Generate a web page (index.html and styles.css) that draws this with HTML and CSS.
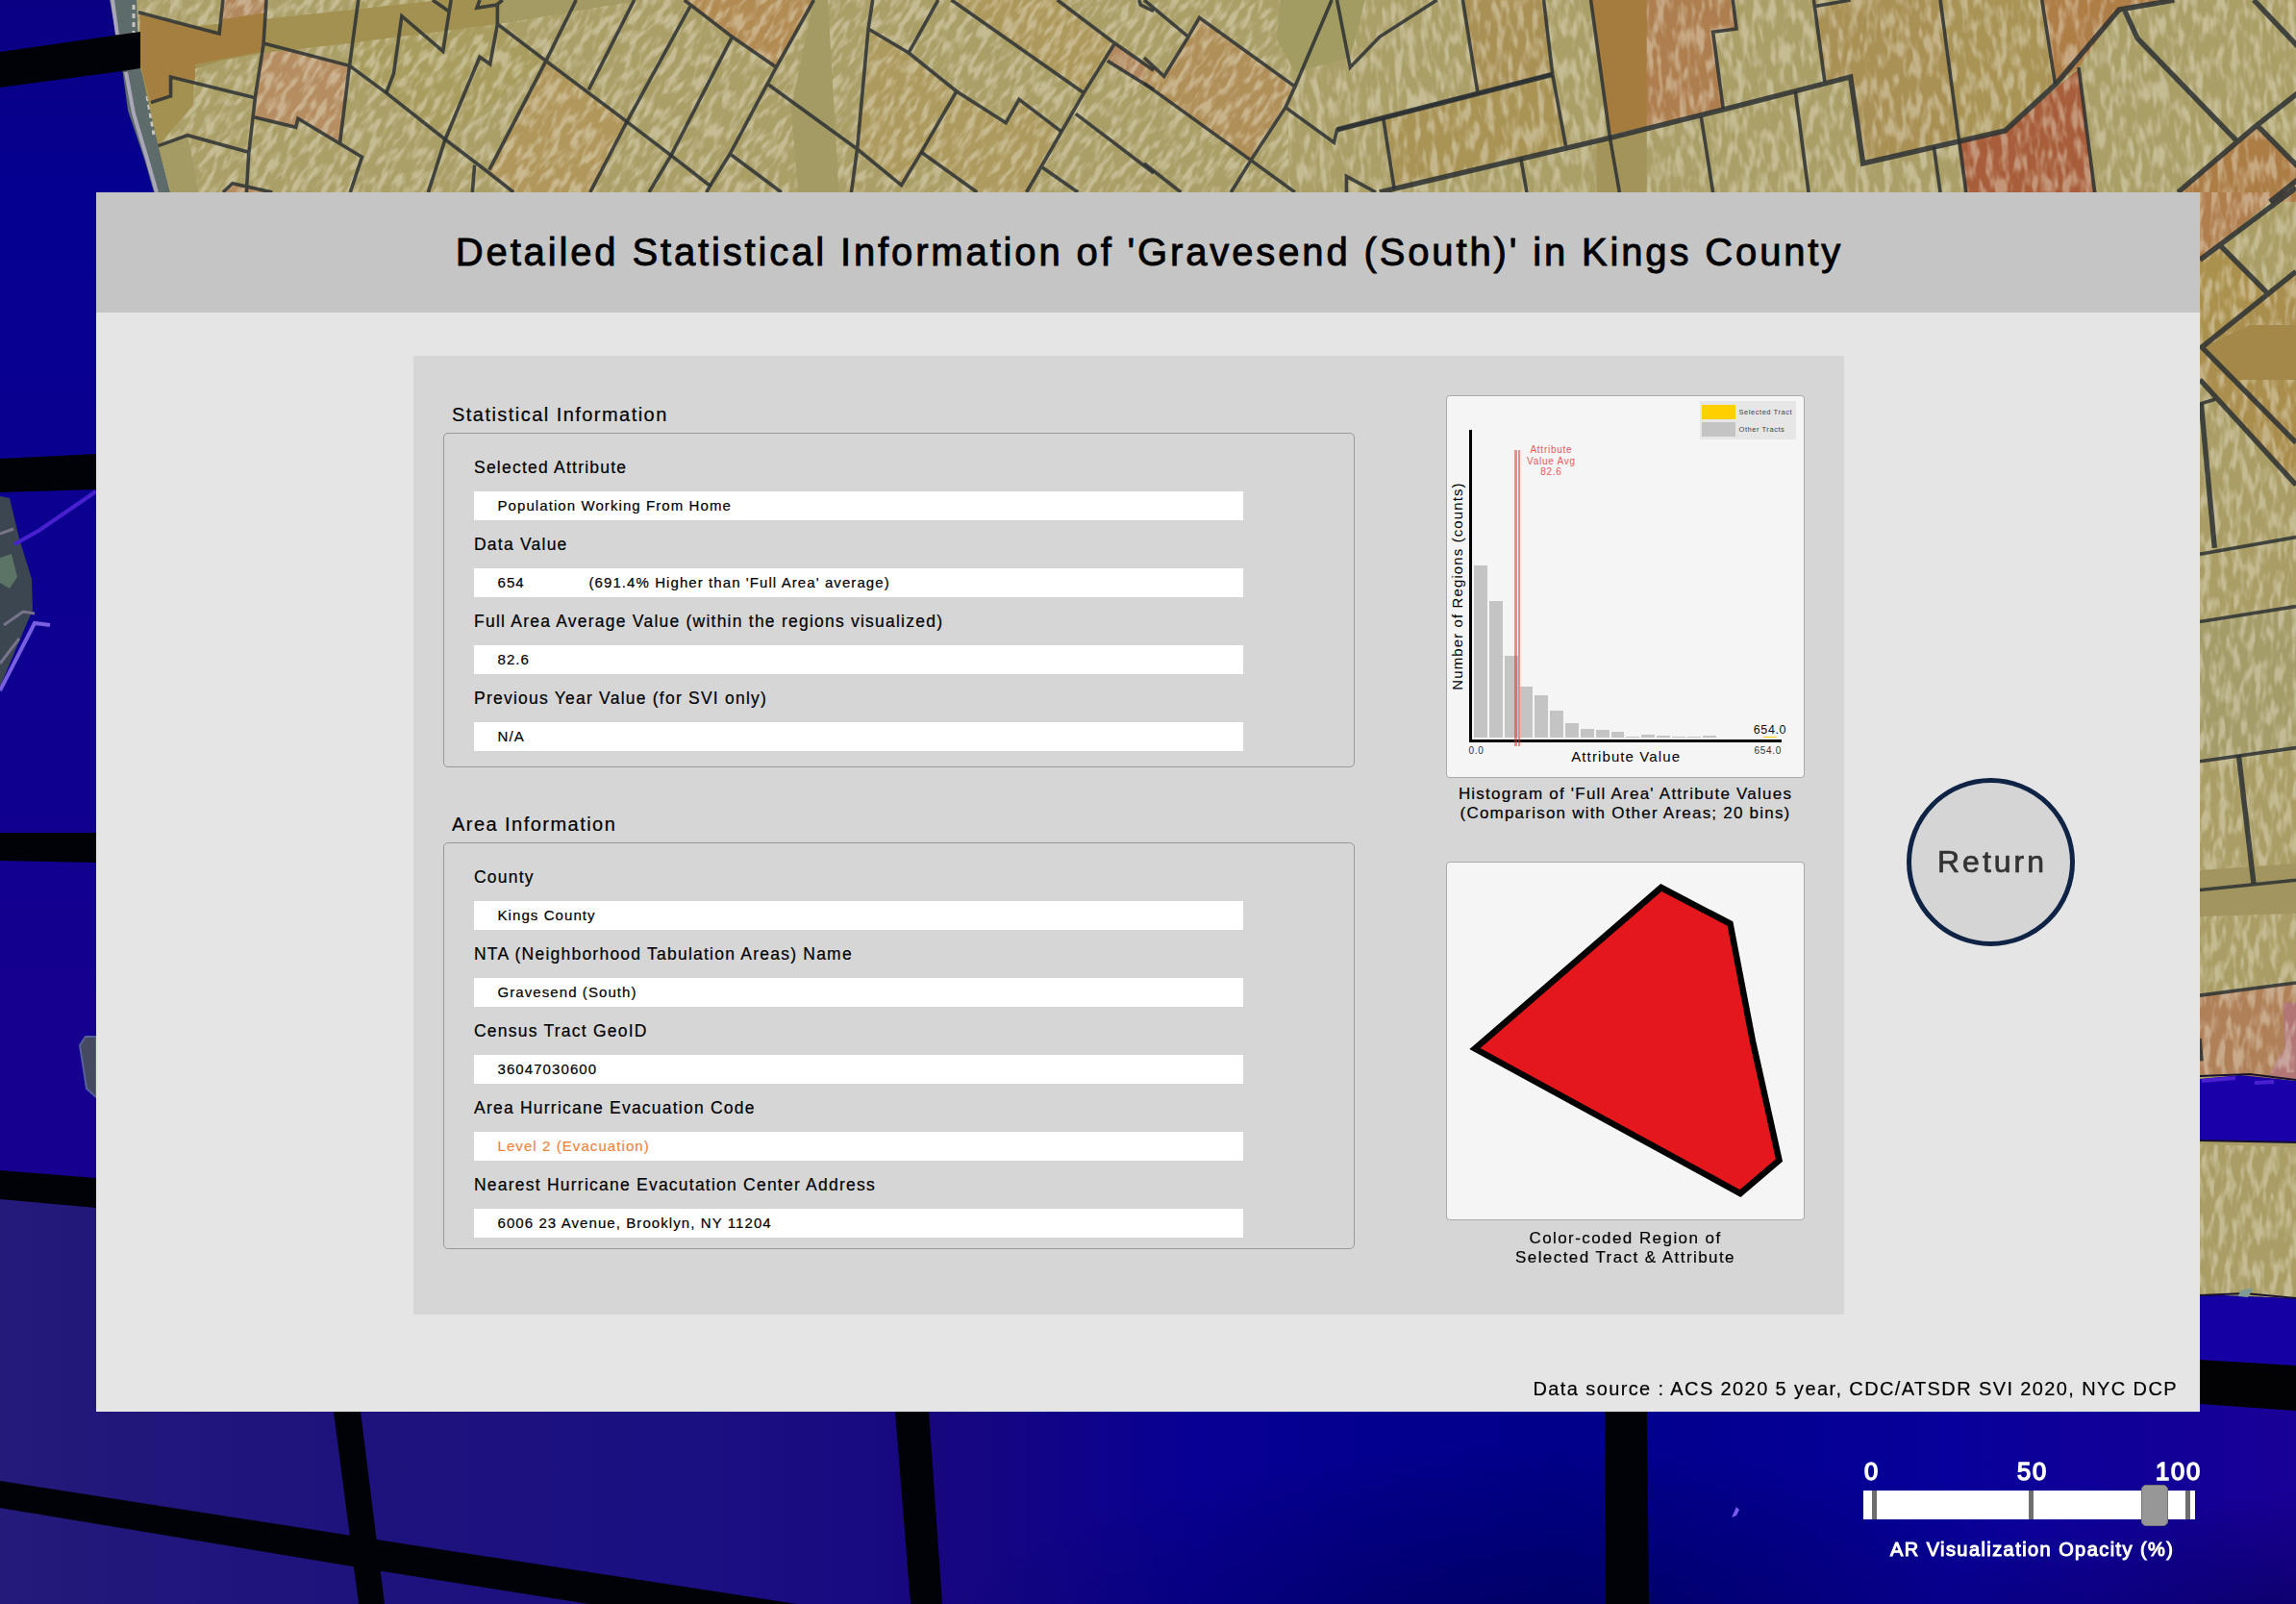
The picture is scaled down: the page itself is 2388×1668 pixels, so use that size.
FILE: index.html
```
<!DOCTYPE html>
<html lang="en">
<head>
<meta charset="utf-8">
<title>Detailed Statistical Information</title>
<link rel="stylesheet" href="styles.css">
</head>
<body>
<svg class="map" viewBox="0 0 2388 1668" aria-hidden="true">
  <defs>
    <linearGradient id="water" x1="0" y1="0" x2="0" y2="1">
      <stop offset="0" stop-color="#0a0084"/><stop offset=".12" stop-color="#050090"/>
      <stop offset=".5" stop-color="#100090"/><stop offset=".62" stop-color="#15008f"/>
    </linearGradient>
    <linearGradient id="deep" x1="0" y1="0" x2="1" y2="0">
      <stop offset="0" stop-color="#231a7a"/><stop offset=".15" stop-color="#1e127c"/>
      <stop offset=".3" stop-color="#1b1082"/><stop offset=".42" stop-color="#16067f"/>
      <stop offset=".52" stop-color="#080094"/><stop offset=".68" stop-color="#00008a"/>
      <stop offset=".85" stop-color="#08009a"/><stop offset="1" stop-color="#190096"/>
    </linearGradient>
    <radialGradient id="shade">
      <stop offset="0" stop-color="#000040" stop-opacity=".55"/><stop offset="1" stop-color="#000040" stop-opacity="0"/>
    </radialGradient>
    <filter id="blocksA" x="0" y="0" width="100%" height="100%">
      <feTurbulence type="fractalNoise" baseFrequency=".15 .055" numOctaves="2" seed="4"/>
      <feColorMatrix values="0 0 0 0 .82  0 0 0 0 .78  0 0 0 0 .64  4 0 0 0 -1.75"/>
    </filter>
    <filter id="blocksB" x="0" y="0" width="100%" height="100%">
      <feTurbulence type="fractalNoise" baseFrequency=".13 .045" numOctaves="2" seed="9"/>
      <feColorMatrix values="0 0 0 0 .82  0 0 0 0 .78  0 0 0 0 .64  4 0 0 0 -1.75"/>
    </filter>
    <clipPath id="landLeft"><path d="M142 0L145 67 157 107 165 153 177 200H1340V0Z"/></clipPath>
    <clipPath id="landRight"><path d="M1340 0H2388V200H1340Z"/></clipPath>
    <clipPath id="landEdge"><path d="M2288 200H2388V1115L2288 1120ZM2288 1190L2388 1193V1350L2288 1346Z"/></clipPath>
  </defs>

  <rect width="2388" height="1668" fill="url(#water)"/>
  <path fill="url(#deep)" d="M0 1240H2388V1668H0Z"/>
  <ellipse fill="url(#shade)" cx="1600" cy="1700" rx="620" ry="200"/>
  <ellipse fill="url(#shade)" cx="2388" cy="1700" rx="400" ry="150"/>

  <!-- Land -->
  <path fill="#5d6b6a" d="M114 0H145L149 80 160 120 180 200H160L150 165 133 115 127 70Z"/>
  <path fill="none" stroke="#a9a6b8" stroke-width="4" d="M117 0L122 36M131 75L139 118 153 165 163 200"/>
  <path fill="none" stroke="#c9c6c0" stroke-width="3" stroke-dasharray="5 4" d="M139 5V34M153 100L160 140"/>
  <path fill="#ab9f68" d="M142 0L145 67 157 107 165 153 177 200H2388V0Z"/>
  <path fill="#aa9e66" d="M2288 200H2388V1350L2288 1346Z"/>

  <g transform="scale(.7653 .3333)">
    <path fill="#a89c5e" d="M487 0L475 205 525 290 605 435 742 190 676 75 683 0Z"/>
    <path fill="#b1975c" d="M742 190L852 380 802 600H698L665 540Z"/>
    <path fill="#b28b52" d="M938 20L1055 210 1106 0H930Z"/>
    <path fill="#ad9a5e" d="M1186 90L1300 285 1225 578 1165 465ZM1300 285L1367 383 1385 310 1442 410 1395 600H1328L1252 475Z"/>
    <path fill="#ae995c" d="M1293 0L1473 290 1515 135 1437 0Z"/>
    <path fill="#b58d60" d="M358 135L475 205 462 445 405 370 402 397 345 365ZM303 600L316 572 370 600Z"/>
    <path fill="#b2895e" d="M305 0H362L358 140 300 100ZM1515 135L1568 220V280L1505 190Z"/>
  </g>
  <g transform="translate(1190 0) scale(.7653 .3333)">
    <path fill="#b08f58" d="M0 180L27 238 60 115 75 55 205 270 145 500 0 260Z"/>
    <path fill="#a99054" d="M433 0H543L555 232 453 285ZM910 20L925 255 960 240 977 510 1107 430 1082 0H960Z"/>
    <path fill="#a99456" d="M325 370L555 232 573 455 512 495 340 590ZM1082 0H1220L1238 260 1170 408 1107 430Z"/>
    <path fill="#ae7e4e" d="M607 0H800L805 90 773 100 787 340 633 420Z"/>
    <path fill="#af7d46" d="M1220 0H1400L1325 30 1270 210 1238 260Z"/>
    <path fill="#a85e3a" d="M1107 440L1170 408 1270 215 1292 600H1117Z"/>
    <path fill="#ad7d46" d="M1405 600L1510 395 1568 520V630H1405Z"/>
  </g>
  <g transform="translate(2280 200) scale(.3333 .9362)">
    <path fill="#b07d4c" d="M24 0H280L24 75Z"/>
    <path fill="#ab914e" d="M24 75L90 60 235 112 30 172 24 172Z"/>
    <path fill="#aa8e4e" d="M24 172L324 88V325L24 208Z"/>
    <path fill="#a59d69" d="M24 477L324 460V617L24 632Z"/>
    <path fill="#b08058" d="M24 892L324 878V986L24 980Z"/>
    <path fill="#b4708a" opacity=".6" d="M285 900H324V986L240 980 290 950Z"/>
  </g>

  <!-- Rooftops and streets showing through the tracts -->
  <g opacity=".42">
    <g clip-path="url(#landLeft)"><rect x="-100" y="-700" width="1700" height="1700" transform="rotate(32 650 100)" filter="url(#blocksA)"/></g>
    <g clip-path="url(#landRight)"><rect x="1300" y="-60" width="1100" height="320" transform="rotate(-4 1860 100)" filter="url(#blocksB)"/></g>
    <g clip-path="url(#landEdge)"><rect x="2200" y="200" width="200" height="1160" filter="url(#blocksB)"/></g>
  </g>

  <!-- Open ground without rooftops -->
  <g transform="scale(.7653 .3333)">
    <path fill="#a39152" d="M190 100L358 60 600 0H870L676 75 475 135 358 165 300 190 265 215 262 330 215 455 190 200Z"/>
    <path fill="#a39a64" d="M683 0H870L676 75ZM1106 0H1125L1140 600H1085L1075 340Z M215 455L255 422 270 600H232Z"/>
    <path fill="#a57f40" d="M190 45L298 105 303 60 360 40 357 160 265 200V250L232 240V300L205 318 190 200Z"/>
  </g>
  <g transform="translate(1190 0) scale(.7653 .3333)">
    <path fill="#a29c62" d="M185 0H300L280 180 205 225 180 120Z"/>
    <path fill="#a57c3e" d="M607 0H683V395L633 420Z"/>
    <path fill="#a3945a" d="M615 440L683 400V600H615Z"/>
  </g>
  <path fill="#a3884a" d="M2291 361L2340 338H2388V395H2318Z"/>
  <path fill="#a39560" d="M2288 905L2388 898V950L2288 953Z"/>

  <!-- Tract outlines -->
  <g class="tracts">
    <g transform="scale(.7653 .3333)">
      <path d="M188 38L298 105 303 0M362 0L358 140 347 300 338 480 335 600M358 135L475 205 525 290 605 435 665 540 698 600M487 0L475 205 462 445M205 320L232 300V240L347 305M215 455L255 422 338 475M345 365L402 397 405 370 492 490 476 600M303 600L316 572 370 600"/>
      <path d="M525 290L535 230 546 50 602 160 613 0M588 0L610 35M652 0L648 25 675 15 683 0M676 15V75L666 200 652 178 605 435 582 600M676 75L742 190 852 380 912 485 965 580 960 600M783 0L742 190 665 530M645 515L642 600M862 0L800 280"/>
      <path d="M938 20L852 380 802 600M930 0L995 115 1055 210M995 115L912 485 882 600M1106 0L1055 210 992 480 965 580M992 480L1062 600M1043 262L1165 465 1225 578 1252 475 1300 285M1186 0L1180 90 1165 465 1157 600M1180 90L1235 165 1300 285 1367 383 1385 310 1442 410M1275 0L1235 165"/>
      <path d="M1293 0L1473 290M1437 0L1515 135 1568 220M1515 135L1473 290 1395 600M1505 190L1568 280M1462 355L1568 540M1252 475L1328 600M1415 520L1465 600M1548 0L1550 15 1568 35"/>
    </g>
    <g transform="translate(1190 0) scale(.7653 .3333)">
      <path d="M0 0L60 115 75 55 205 270 192 335 145 500 118 600M0 180L27 238 60 115M0 260L145 500 205 600M0 510L50 600M255 0L205 270M192 335L258 445 262 405 555 232M262 0L280 210 320 115 398 0M433 0L453 285M543 0L555 232 573 455M607 0L633 430 646 600"/>
      <path d="M325 370L340 590M275 600V550L315 600M512 495L520 600M800 0L805 90 773 100 787 340M757 365L773 600M910 0L925 255M910 20L960 0M885 285L903 600M1082 0L1107 430 1117 600M1220 0L1238 260M1270 210L1292 600M1073 455L1082 600"/>
      <path class="wide" d="M262 405L555 232M320 600L633 430 790 340 960 240 977 510 1170 408 1240 260 1325 30 1400 0M1333 35L1350 120 1485 440M1405 600L1510 395 1568 290M1510 385L1568 520M1508 0L1568 145M1530 630L1568 560"/>
    </g>
    <g transform="translate(2280 200) scale(.3333 .9362)">
      <path class="wide" d="M24 75L324 -5M90 60L235 112M324 88L30 172 324 278M24 208L324 325M28 235L70 395M145 625L192 768"/>
      <path d="M24 235L72 230M24 402L324 383M24 477L324 460M24 632L324 617M24 775L324 764M24 892L324 878M24 940L30 965"/>
    </g>
  </g>

  <!-- Canal, bay and shoreline on the right -->
  <path fill="#1a00a8" d="M2288 1122L2330 1118 2388 1124V1188L2288 1186Z"/>
  <path fill="none" stroke="#4a20d0" stroke-width="4" d="M2290 1124L2325 1121M2345 1126L2365 1125"/>
  <path fill="none" stroke="#16122e" stroke-width="2" d="M2288 1186L2388 1188M2288 1119L2340 1117 2388 1123M2288 1347L2335 1345 2388 1350"/>
  <path fill="#1500a4" d="M2288 1348L2388 1351V1420L2288 1415Z"/>
  <path fill="#7f9a92" d="M2330 1342L2344 1339 2338 1349 2328 1348Z"/>
  <path fill="#020204" d="M2288 1414L2388 1420V1467L2288 1460Z"/>

  <!-- Window frame bars over the water -->
  <g fill="#010208">
    <path d="M0 54L125 36 146 33V71L127 74 0 91Z"/>
    <path d="M0 477L100 472V509L0 512ZM0 866H100V897L0 895ZM0 1217L100 1225V1256L0 1247Z"/>
    <path d="M0 1540L398 1602 829 1668H613L373 1630 0 1568Z"/>
    <path d="M347 1468H375L400 1668H373ZM931 1468H966L980 1668H947ZM1669 1468H1713L1715 1668H1670Z"/>
  </g>

  <!-- Islands -->
  <path fill="#3c4650" d="M0 516L10 518 20 560 33 602 34 634 0 714Z"/>
  <path fill="#5c7466" d="M0 580L12 576 18 600 10 612 0 606Z"/>
  <path fill="none" stroke="#77738a" stroke-width="3" d="M0 555L14 550M4 650L24 636 36 638M0 690L20 664"/>
  <path fill="none" stroke="#4820d0" stroke-width="4" d="M15 566L40 552 100 511"/>
  <path fill="none" stroke="#7a60e0" stroke-width="4" d="M0 718L36 648 52 650"/>
  <path fill="#444b60" stroke="#56609a" stroke-width="2" d="M83 1087L89 1078H100V1141L90 1132Z"/>
  <path fill="#7a5cf0" d="M1806 1567L1809 1570 1806 1576 1801 1578Z"/>
</svg>

<main class="panel">
  <header class="panel-header"><h1>Detailed Statistical Information of 'Gravesend (South)' in Kings County</h1></header>
  <div class="panel-body">
    <section class="card">
      <div class="details">
        <h2>Statistical Information</h2>
        <dl class="group group-stats">
          <dt>Selected Attribute</dt><dd>Population Working From Home</dd>
          <dt>Data Value</dt><dd><span class="amount">654</span><span>(691.4% Higher than 'Full Area' average)</span></dd>
          <dt>Full Area Average Value (within the regions visualized)</dt><dd>82.6</dd>
          <dt>Previous Year Value (for SVI only)</dt><dd>N/A</dd>
        </dl>
        <h2>Area Information</h2>
        <dl class="group group-area">
          <dt>County</dt><dd>Kings County</dd>
          <dt>NTA (Neighborhood Tabulation Areas) Name</dt><dd>Gravesend (South)</dd>
          <dt>Census Tract GeoID</dt><dd>36047030600</dd>
          <dt>Area Hurricane Evacuation Code</dt><dd class="alert">Level 2 (Evacuation)</dd>
          <dt>Nearest Hurricane Evacutation Center Address</dt><dd>6006 23 Avenue, Brooklyn, NY 11204</dd>
        </dl>
      </div>
      <div class="figures">
        <figure>
          <svg class="frame" width="373" height="398" viewBox="1504 411 373 398">
            <rect x="1768" y="417" width="100" height="40" fill="#e6e6e6"/>
            <rect x="1770" y="421" width="35" height="15" fill="#ffd000"/>
            <rect x="1770" y="439" width="35" height="15" fill="#c4c4c4"/>
            <g class="legend"><text x="1808.5" y="431">Selected Tract</text><text x="1808.5" y="449">Other Tracts</text></g>
            <g fill="#c4c4c4">
              <rect x="1533" y="588" width="14" height="179"/><rect x="1549" y="625" width="14" height="142"/>
              <rect x="1565" y="682" width="14" height="85"/><rect x="1581" y="714" width="13" height="53"/>
              <rect x="1596" y="723" width="14" height="44"/><rect x="1612" y="739" width="14" height="28"/>
              <rect x="1628" y="752" width="14" height="15"/><rect x="1644" y="758" width="14" height="9"/>
              <rect x="1660" y="759" width="14" height="8"/><rect x="1676" y="761" width="13" height="6"/>
              <rect x="1691" y="766" width="14" height="1"/><rect x="1707" y="764" width="14" height="3"/>
              <rect x="1723" y="765" width="14" height="2"/><rect x="1739" y="766" width="14" height="1"/>
              <rect x="1755" y="766" width="14" height="1"/><rect x="1771" y="765" width="14" height="2"/>
            </g>
            <rect x="1834" y="766" width="14" height="1" fill="#ffd000"/>
            <path fill="#000" d="M1528 447H1531V769H1853V772H1528Z"/>
            <path fill="#d93636" fill-opacity=".55" d="M1575 468H1578V776H1575ZM1579 468H1581V776H1579Z"/>
            <g class="average"><text x="1613.4" y="471">Attribute</text><text x="1613.4" y="482.5">Value Avg</text><text x="1613.4" y="494">82.6</text></g>
            <text class="axis" x="1691.2" y="791.6">Attribute Value</text>
            <text class="axis" transform="translate(1520.5 609.5) rotate(-90)">Number of Regions (counts)</text>
            <g class="tick"><text x="1527.6" y="784">0.0</text><text x="1824.6" y="784">654.0</text></g>
            <text class="peak" x="1823.8" y="763.2">654.0</text>
          </svg>
          <figcaption>Histogram of 'Full Area' Attribute Values<br>(Comparison with Other Areas; 20 bins)</figcaption>
        </figure>
        <figure class="region">
          <svg class="frame" width="373" height="373" viewBox="1504 896 373 373">
            <path fill="#e4171c" stroke="#000" stroke-width="6.5" d="M1534 1090.5L1727.7 923 1799.5 960.5 1823 1083 1850.5 1206.5 1810 1241Z"/>
          </svg>
          <figcaption>Color-coded Region of<br>Selected Tract &amp; Attribute</figcaption>
        </figure>
      </div>
    </section>
    <button class="return" type="button">Return</button>
  </div>
  <footer class="source">Data source : ACS 2020 5 year, CDC/ATSDR SVI 2020, NYC DCP</footer>
</main>

<section class="opacity">
  <div class="scale"><span>0</span><span>50</span><span>100</span></div>
  <div class="track"><i></i><i></i><i></i><b class="thumb"></b></div>
  <p>AR Visualization Opacity (%)</p>
</section>
</body>
</html>
```
FILE: styles.css
```
* { box-sizing: border-box; }
body {
  margin: 0;
  width: 2388px;
  height: 1668px;
  padding: 200px 100px 0;
  overflow: hidden;
  position: relative;
  background: #050090;
  color: #000;
  font-family: "Liberation Sans", Arial, sans-serif;
  -webkit-text-stroke: .2px currentColor;
}
h1, h2, dl, dt, dd, figure, p { margin: 0; font-weight: normal; }

.map { position: absolute; left: 0; top: 0; width: 2388px; height: 1668px; z-index: -1; }
.tracts path { fill: none; stroke: #2c3033; stroke-opacity: .85; stroke-width: 3.6; vector-effect: non-scaling-stroke; }
.tracts path.wide { stroke-width: 5.4; }

.panel { display: flex; flex-direction: column; width: 2188px; height: 1268px; background: #e5e5e5; }
.panel-header { display: flex; align-items: center; justify-content: center; height: 125px; background: #c5c5c5; }
h1 { font-size: 40px; letter-spacing: 2.86px; white-space: nowrap; padding-left: 3px; -webkit-text-stroke-width: .9px; }

.panel-body { display: flex; align-items: flex-start; padding: 45px 0 0 330px; }
.card { display: flex; gap: 95px; width: 1488px; height: 997px; padding: 41px 0 0 31px; background: #d6d6d6; }
.details { width: 948px; padding-top: 1px; }
h2 { font-size: 20px; line-height: 38px; letter-spacing: 1.46px; padding-left: 9px; }
.group { border: 1px solid #999; border-radius: 5px; padding: 20px 0 0 31px; }
.group-stats { height: 348px; margin-bottom: 40px; }
.group-area { height: 423px; }
dt { font-size: 17.5px; line-height: 30px; letter-spacing: 1.23px; margin-bottom: 10px; }
dd { display: flex; width: 800px; height: 30px; padding-left: 24.5px; margin-bottom: 10px; background: #fff; font-size: 15px; line-height: 30px; letter-spacing: 1.08px; }
.amount { width: 95px; }
.alert { color: #f08540; }

.figures { display: flex; flex-direction: column; width: 373px; }
.frame { display: block; background: #f5f5f5; border-radius: 4px; box-shadow: inset 0 0 0 1px #aaa; }
figcaption { margin-top: 7px; font-size: 17px; line-height: 20px; letter-spacing: 1.22px; text-align: center; }
.region { margin-top: 40px; }
.region figcaption { margin-top: 9px; letter-spacing: 1.43px; }
.legend { font-size: 7.5px; letter-spacing: .55px; fill: #444; }
.average { font-size: 10px; letter-spacing: .74px; fill: #e8585c; text-anchor: middle; -webkit-text-stroke: .3px #e8585c; }
.axis { font-size: 15px; letter-spacing: 1.11px; text-anchor: middle; }
.tick { font-size: 10px; letter-spacing: .65px; fill: #333; }
.peak { font-size: 12.5px; letter-spacing: .6px; fill: #111; }

.return {
  width: 175px; height: 175px; margin: 439px 0 0 65px; padding: 0 0 0 3px;
  border: 5px solid #0f2345; border-radius: 50%;
  background: #d5d5d5; color: #333; font: 32px "Liberation Sans", Arial, sans-serif; letter-spacing: 3px;
  -webkit-text-stroke: .7px #333;
}
.source { margin-top: auto; height: 38px; padding-right: 23px; text-align: right; font-size: 20px; line-height: 29px; letter-spacing: 1.39px; }

.opacity { width: 350px; margin: 48px 0 0 1838px; color: #fff; -webkit-text-stroke: 1.5px #fff; }
.scale { display: grid; grid-template-columns: 100px 150px 100px; height: 34px; font-size: 25.5px; line-height: 29px; letter-spacing: 1.84px; }
.scale span:first-child { padding-left: 1px; }
.scale span:nth-child(2) { text-align: center; padding-left: 2px; }
.scale span:last-child { text-align: right; margin-right: -2px; }
.track { position: relative; display: flex; justify-content: space-between; width: 345px; height: 30px; padding: 0 5px 0 9px; background: #fff; }
.track i { width: 5px; background: #6e6e6e; }
.thumb { position: absolute; left: 289px; top: -6px; width: 28px; height: 43px; border: 1px solid #777; border-radius: 5px; background: #979797; }
.opacity p { margin: 18px 0 0 28px; font-size: 20px; line-height: 27px; letter-spacing: 1.43px; white-space: nowrap; -webkit-text-stroke-width: 1px; }
```
